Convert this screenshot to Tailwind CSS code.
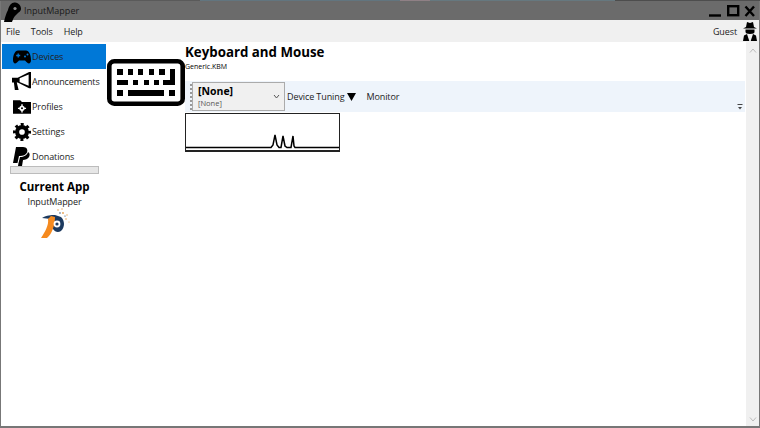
<!DOCTYPE html>
<html lang="en">
<head>
  <meta charset="UTF-8">
  <title>InputMapper</title>
  <script src="https://cdn.jsdelivr.net/npm/@tailwindcss/browser@4"></script>
</head>
<body class="w-[760px] h-[428px] overflow-hidden bg-white font-['Open_Sans','Noto_Sans',sans-serif] text-[#222]">
  <!-- Desktop bleeding through at the top edge -->
  <div class="flex h-[1px]">
    <div class="w-[200px] bg-[#5a5a5a]"></div>
    <div class="w-[200px] bg-[#62757f]"></div>
    <div class="w-[30px] bg-[#8f8085]"></div>
    <div class="w-[185px] bg-[#66787f]"></div>
    <div class="flex-1 bg-[#4d4d4d]"></div>
  </div>
  <div class="flex flex-col h-[427px] border-l border-r border-b-2 border-[#777]">
    <!-- Title bar -->
    <div class="relative flex items-center h-[19px] bg-[#6b6b6b] pl-[23px] pr-[4px]">
      <svg class="absolute left-[1px] top-0 w-[20px] h-[21px]" viewBox="0 0 20 21"><path d="M2 21C3 16 4 13 6 9C7 4 10 1 13 1.5C17 2 19 5 19 8C19 10 17 11 16 12C14 14 12 15 10 21Z" fill="#000"/><circle cx="13" cy="7.5" r="1.6" fill="#8a8a8a"/></svg>
      <span class="text-[9px] text-[#1a1a1a]">InputMapper</span>
      <div class="flex-1"></div>
      <svg class="w-[46px] h-[14px]" viewBox="0 0 46 14" fill="none" stroke="#000" stroke-width="2.4">
        <path d="M0 11.5H12"/>
        <rect x="19.2" y="2.2" width="10" height="9"/>
        <path d="M36.5 2.5L45 12M45 2.5L36.5 12"/>
      </svg>
    </div>
    <!-- Menu bar -->
    <div class="flex items-center h-[22px] bg-[#f0f0f0] pl-[5px] pr-[1px] text-[9px] tracking-[-0.1px] text-[#222]">
      <span class="pt-[1px]">File</span>
      <span class="ml-[11px] pt-[1px]">Tools</span>
      <span class="ml-[11px] pt-[1px]">Help</span>
      <div class="flex-1"></div>
      <span class="pt-[1px]">Guest</span>
      <svg class="ml-[5px] w-[16px] h-[20px]" viewBox="0 0 16 20" fill="#000"><path d="M4 6L5 1L8 2L11 1L12 6L15 7.5H1Z"/><path d="M3.5 8.5H12.5V11C12.5 12 11 13 8 13C5 13 3.5 12 3.5 11Z"/><path d="M1 20L2 14.5L5 13L7.3 20ZM15 20L14 14.5L11 13L8.7 20Z"/></svg>
    </div>
    <!-- Body -->
    <div class="flex flex-1 min-h-0">
      <!-- Sidebar -->
      <div class="flex flex-col w-[105px] pl-[1px] pt-[2px] shrink-0 text-[9px] tracking-[-0.1px]">
        <div class="flex items-center h-[25px] bg-[#0078d7] pl-[9px]">
          <div class="flex justify-center items-center w-[21px] shrink-0">
            <svg class="w-[18px] h-[14px]" viewBox="0 0 18 14"><path d="M5 0.5H13C16 0.5 18 5 18 10C18 13.5 15.5 14.5 13.5 12L12 10.5H6L4.5 12C2.5 14.5 0 13.5 0 10C0 5 2 0.5 5 0.5Z" fill="#000"/><path d="M3.2 5.5H7.2M5.2 3.5V7.5" stroke="#0078d7" stroke-width="1.3"/><circle cx="12" cy="6.5" r="1" fill="#0078d7"/><circle cx="14.5" cy="4.5" r="1" fill="#0078d7"/></svg>
          </div>
          <span class="pt-[1px]">Devices</span>
        </div>
        <div class="flex items-center h-[25px] pl-[9px]">
          <div class="flex justify-center items-center w-[21px] shrink-0">
            <svg class="w-[19px] h-[19px]" viewBox="0 0 20 20" fill="#000"><path d="M0 6H6L18 0H20V17H18L6 11H5L7 19H3L2 11H0Z"/><path d="M8 6.5L17.5 2.5V14.5L8 10.5Z" fill="#fff"/></svg>
          </div>
          <span class="pt-[1px]">Announcements</span>
        </div>
        <div class="flex items-center h-[25px] pl-[9px]">
          <div class="flex justify-center items-center w-[21px] shrink-0">
            <svg class="w-[18px] h-[14px]" viewBox="0 0 20 15"><path d="M0 0H8L10 2H20V15H0Z" fill="#000"/><path d="M10 4.5V13.5M5.5 9H14.5" stroke="#fff" stroke-width="1.6"/><circle cx="10" cy="9" r="3" fill="#fff"/><circle cx="10" cy="9" r="1.1" fill="#000"/></svg>
          </div>
          <span>Profiles</span>
        </div>
        <div class="flex items-center h-[25px] pl-[9px]">
          <div class="flex justify-center items-center w-[21px] shrink-0">
            <svg class="w-[18px] h-[18px]" viewBox="0 0 24 24" fill="none" stroke="#000"><circle cx="12" cy="12" r="6.5" stroke-width="5.5"/><circle cx="12" cy="12" r="10" stroke-width="4" stroke-dasharray="3.9 3.95" stroke-dashoffset="1.95"/></svg>
          </div>
          <span>Settings</span>
        </div>
        <div class="flex items-center h-[25px] pl-[9px]">
          <div class="flex justify-center items-center w-[21px] shrink-0">
            <svg class="w-[17px] h-[19px]" viewBox="0 0 17 19" fill="#000"><path d="M3 0H10C14 0 15 3 14 5.5C13 8 10 9 7 9H6L4.5 16H0Z"/><path d="M15 5C17 6 17 8 16 10C15 12 12 13 10 13L9 19H5L5.5 16L7 10C11 10 14 8.5 15 5Z"/></svg>
          </div>
          <span>Donations</span>
        </div>
        <div class="ml-[8px] mt-[-3px] w-[89px] h-[8px] bg-[#e6e6e6] border border-[#bcbcbc]"></div>
        <div class="flex flex-col items-center w-[105px] mt-[5px]">
          <span class="text-[11.5px] tracking-normal font-bold leading-[16px] text-black">Current App</span>
          <span class="text-[9px] leading-[13px]">InputMapper</span>
          <svg class="w-[32px] h-[32px] mt-[-1px]" viewBox="0 0 32 32">
            <path d="M3 11C8 8 12 8 16 8L22 10C26 14 26 20 22 24C19 26 16 25 14 22L12 12Z" fill="#1d3a5f"/>
            <path d="M12 9L16 10C16 18 13 27 8 31L2 31C6 25 10 18 9 12Z" fill="#f58a1f"/>
            <circle cx="18" cy="17" r="3.4" fill="#fff"/><circle cx="18" cy="17" r="1.6" fill="#1d3a5f"/>
            <g fill="#e8a050"><circle cx="19" cy="3" r="0.8"/><circle cx="23" cy="2" r="0.7"/><circle cx="24" cy="6" r="0.9"/><circle cx="28" cy="8" r="0.7"/><circle cx="27" cy="12" r="0.8"/><circle cx="30" cy="15" r="0.6"/></g>
            <g fill="#1d3a5f"><circle cx="21" cy="6" r="0.7"/><circle cx="26" cy="9" r="0.6"/></g>
          </svg>
        </div>
      </div>
      <!-- Keyboard icon column -->
      <div class="w-[79px] shrink-0 pt-[17px]">
        <svg class="ml-[1px] w-[78px] h-[47px]" viewBox="0 0 78 47" fill="#000">
          <rect x="2.3" y="2.3" width="73.4" height="42.4" rx="5" fill="#fff" stroke="#000" stroke-width="4.6"/>
          <rect x="10" y="10" width="6" height="6"/><rect x="21" y="10" width="5" height="6"/><rect x="31" y="10" width="5" height="6"/><rect x="42" y="10" width="5" height="6"/><rect x="52" y="10" width="6" height="6"/>
          <path d="M63 10H68V26H56V21H63Z"/>
          <rect x="10" y="21" width="11" height="5"/><rect x="26" y="21" width="5" height="5"/><rect x="37" y="21" width="5" height="5"/><rect x="47" y="21" width="5" height="5"/>
          <rect x="10" y="31" width="6" height="6"/><rect x="21" y="31" width="36" height="6"/><rect x="62" y="31" width="6" height="6"/>
        </svg>
      </div>
      <!-- Main -->
      <div class="flex-1 min-w-0 flex flex-col pt-[2px]">
        <div class="text-[13.3px] font-bold leading-[17px] text-black">Keyboard and Mouse</div>
        <div class="mt-[1px] text-[7px] leading-[10px] text-black">Generic.KBM</div>
        <div class="relative flex items-center h-[31px] mt-[9px] w-[560px] bg-[#eef4fb] text-[9px] tracking-[-0.1px]">
          <div class="w-[2px] h-[26px] ml-[5px] mr-[0px] border-l-2 border-dotted border-[#999]"></div>
          <div class="relative flex flex-col justify-center w-[93px] h-[29px] pl-[5px] bg-[#f0f0f0] border border-[#ababab]">
            <span class="text-[10.5px] tracking-normal font-bold leading-[13px] text-black">[None]</span>
            <span class="text-[7.5px] tracking-normal leading-[10px] text-[#555]">[None]</span>
            <svg class="absolute right-[4px] top-[11px] w-[7px] h-[5px]" viewBox="0 0 7 5" fill="none" stroke="#555" stroke-width="1"><path d="M1 1L3.5 4L6 1"/></svg>
          </div>
          <span class="ml-[2px] pt-[1px]">Device Tuning</span>
          <svg class="ml-[3px] mt-[1px] w-[9px] h-[8px]" viewBox="0 0 9 8" fill="#000"><path d="M0 0H9L4.5 8Z"/></svg>
          <span class="ml-[10px] pt-[1px]">Monitor</span>
          <svg class="absolute right-[2px] bottom-[2px] w-[6px] h-[6px]" viewBox="0 0 6 6" fill="none" stroke="#444" stroke-width="1"><path d="M0.5 0.5H5.5"/><path d="M1 3H5L3 5.5Z" fill="#444" stroke="none"/></svg>
        </div>
        <div class="w-[155px] h-[39px] mt-[1px] border border-[#222] border-b-2 bg-white">
          <svg class="w-full h-full" viewBox="0 0 153 36" fill="none" stroke="#000" stroke-width="1.5"><path d="M0 33.5H85L87 31L89 21L91 31L93 33.5H95L97 22L99 32L101 33.5H105L107 22L108 32L109 33.5H153"/></svg>
        </div>
      </div>
      <!-- Scrollbar -->
      <div class="flex flex-col items-center justify-between w-[13px] shrink-0 bg-[#f0f0f0] pt-[6px] pb-[4px]">
        <svg class="w-[8px] h-[5px]" viewBox="0 0 8 5" fill="none" stroke="#bbb" stroke-width="1"><path d="M1 4.5L4 1L7 4.5"/></svg>
        <svg class="w-[8px] h-[5px]" viewBox="0 0 8 5" fill="none" stroke="#bbb" stroke-width="1"><path d="M1 .5L4 4L7 .5"/></svg>
      </div>
    </div>
  </div>
</body>
</html>
